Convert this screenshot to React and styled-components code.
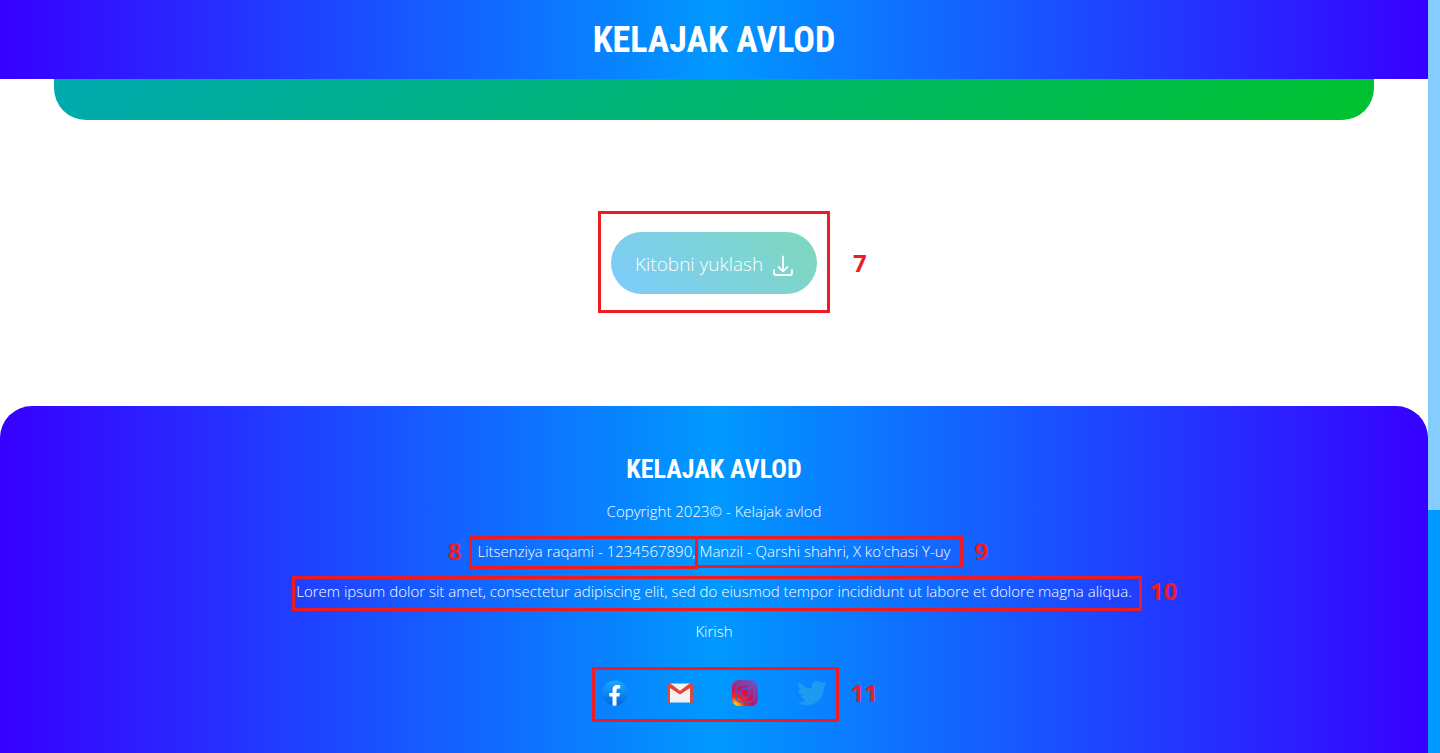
import React from 'react';
import styled, { createGlobalStyle } from 'styled-components';

const GlobalStyle = createGlobalStyle`
  * { box-sizing: border-box; }
  body { margin: 0; background: #fff; font-family: 'Open Sans', 'Noto Sans', sans-serif; }
`;

const brandGradient = 'linear-gradient(90deg, #3700ff, #0099ff 50%, #3700ff)';

const Page = styled.div`
  display: grid;
  grid-template-columns: minmax(0, 1fr) 12px;
  min-height: 100vh;
`;

const Content = styled.div`
  display: flex;
  flex-direction: column;
`;

const ScrollTrack = styled.div`
  display: flex;
  flex-direction: column;
  justify-content: flex-end;
  background: #85ccff;
`;

const ScrollThumb = styled.div`
  height: 243px;
  background: #0099ff;
`;

const Header = styled.header`
  display: flex;
  align-items: center;
  justify-content: center;
  height: 79px;
  background: ${brandGradient};
`;

const Brand = styled.div`
  color: #fff;
  font-family: 'Roboto Condensed', 'Liberation Sans Narrow', 'Liberation Sans', sans-serif;
  font-weight: 700;
  font-size: ${(p) => (p.$small ? 26 : 36)}px;
  line-height: ${(p) => (p.$small ? 44 : 60)}px;
  white-space: nowrap;
`;

const Main = styled.main`
  display: flex;
  flex: 1;
  flex-direction: column;
`;

const HeroEnd = styled.div`
  height: 41px;
  margin: 0 54px;
  border-radius: 0 0 32px 32px;
  background: linear-gradient(135deg, #00a9b0, #00c22e);
`;

const DownloadArea = styled.section`
  display: flex;
  flex: 1;
  align-items: center;
  justify-content: center;
  min-height: 286px;
`;

const Callout = styled.span`
  position: relative;
  display: inline-flex;
  &::after {
    content: '';
    position: absolute;
    inset: ${(p) => p.$inset};
    border: 3px solid #ed1c24;
    pointer-events: none;
  }
`;

const CalloutNumber = styled.span`
  position: absolute;
  top: 50%;
  ${(p) => (p.$before ? 'right' : 'left')}: calc(100% + ${(p) => p.$gap}px);
  transform: translateY(-50%);
  color: #ed1c24;
  font-size: 24px;
  font-weight: 700;
  line-height: 32px;
`;

const DownloadButton = styled.button`
  display: flex;
  align-items: center;
  justify-content: space-between;
  width: 206px;
  height: 62px;
  padding: 2px 24px 0;
  border: 0;
  border-radius: 32px;
  background: linear-gradient(45deg, #0099ff, #00b377);
  opacity: 0.5;
  color: #fff;
  font: 300 19px/28px 'Open Sans', 'Noto Sans', sans-serif;
  white-space: nowrap;
`;

const Footer = styled.footer`
  display: flex;
  flex-direction: column;
  align-items: center;
  min-height: 347px;
  padding: 41px 16px 32px;
  border-radius: 32px 32px 0 0;
  background: ${brandGradient};
`;

const Line = styled.p`
  display: flex;
  gap: 4px;
  margin: 0;
  color: #fff;
  font-size: 15px;
  font-weight: 300;
  line-height: 40px;
  white-space: nowrap;
`;

const LoginLink = styled.a`
  color: #fff;
  text-decoration: none;
`;

const Socials = styled.nav`
  display: flex;
  align-items: center;
  gap: 39px;
`;

const SocialRow = styled.div`
  display: flex;
  margin-top: 29px;
`;

const SocialLink = styled.a`
  display: flex;
  svg { display: block; }
`;

const DownloadIcon = () => (
  <svg width="20" height="24" viewBox="0 -4 20 24" fill="none" stroke="#fff" strokeWidth="1.8" strokeLinecap="round" strokeLinejoin="round" aria-hidden="true">
    <path d="M10 0.500v14.500M5.500 11l4.500 4.400 4.500-4.400M1 14v3q0 2 2 2h14q2 0 2-2v-3" />
  </svg>
);

const FacebookIcon = () => (
  <svg width="26" height="26" viewBox="0 0 26 26" aria-hidden="true">
    <defs>
      <linearGradient id="fb" x1="0" y1="0" x2="0" y2="1">
        <stop offset="0" stopColor="#18acfe" />
        <stop offset="1" stopColor="#0163e0" />
      </linearGradient>
    </defs>
    <circle cx="13" cy="13" r="12.5" fill="url(#fb)" />
    <path fill="#fff" d="M17.4 16.5l.6-3.600h-3.500v-2.400c0-1 .5-2 2-2h1.700V5.400s-1.500-.3-2.900-.3c-3 0-4.800 1.800-4.800 4.900v2.900H7.300v3.600h3.200v9q2 .3 4 0v-9z" />
  </svg>
);

const GmailIcon = () => (
  <svg width="26" height="20" viewBox="0 0 26 20" aria-hidden="true">
    <rect x="1" y="0.500" width="24" height="19" fill="#f2f2f2" />
    <path fill="#d54b3d" d="M0 2Q0 0 2 0l1 1v19H1.500Q0 20 0 18.500zM26 2q0-2-2-2l-1 1v19h1.500q1.500 0 1.500-1.500z" />
    <path fill="#e84435" d="M0 2Q0 0 2 0h.8L13 7.800 23.200 0h.8q2 0 2 2 0 1-1 1.700L13 11.500 1 3.700Q0 3 0 2z" />
  </svg>
);

const InstagramIcon = () => (
  <svg width="26" height="26" viewBox="0 0 26 26" fill="none" aria-hidden="true">
    <defs>
      <radialGradient id="ig" cx="0.120" cy="1" r="1.150">
        <stop offset="0.080" stopColor="#ffc800" />
        <stop offset="0.300" stopColor="#f02a24" />
        <stop offset="0.600" stopColor="#c9105e" />
        <stop offset="1" stopColor="#6655c8" />
      </radialGradient>
    </defs>
    <rect width="26" height="26" rx="6.500" fill="url(#ig)" />
    <rect x="4" y="4" width="18" height="18" rx="5" stroke="#5a55c0" strokeWidth="1.500" />
    <circle cx="13" cy="13" r="4.700" stroke="#5a55c0" strokeWidth="1.500" />
    <circle cx="18.200" cy="7.800" r="1.100" fill="#1685f0" />
  </svg>
);

const TwitterIcon = () => (
  <svg width="30" height="26" viewBox="0 2 24 20" aria-hidden="true">
    <path fill="#1d9bf0" d="M23.953 4.570a10 10 0 01-2.825.775 4.958 4.958 0 002.163-2.723c-.951.555-2.005.959-3.127 1.184a4.920 4.920 0 00-8.384 4.482C7.690 8.095 4.067 6.130 1.640 3.162a4.822 4.822 0 00-.666 2.475c0 1.710.870 3.213 2.188 4.096a4.904 4.904 0 01-2.228-.616v.060a4.923 4.923 0 003.946 4.827 4.996 4.996 0 01-2.212.085 4.936 4.936 0 004.604 3.417 9.867 9.867 0 01-6.102 2.105c-.390 0-.779-.023-1.170-.067a13.995 13.995 0 007.557 2.209c9.053 0 13.998-7.496 13.998-13.985 0-.210 0-.420-.015-.630A9.935 9.935 0 0024 4.590z" />
  </svg>
);

const socials = [
  { name: 'Facebook', Icon: FacebookIcon },
  { name: 'Gmail', Icon: GmailIcon },
  { name: 'Instagram', Icon: InstagramIcon },
  { name: 'Twitter', Icon: TwitterIcon },
];

export default function App() {
  return (
    <>
      <GlobalStyle />
      <Page>
        <Content>
          <Header>
            <Brand>KELAJAK AVLOD</Brand>
          </Header>
          <Main>
            <HeroEnd />
            <DownloadArea>
              <Callout $inset="-21px -13px -19px -13px">
                <DownloadButton type="button">
                  Kitobni yuklash
                  <DownloadIcon />
                </DownloadButton>
                <CalloutNumber $gap={36}>7</CalloutNumber>
              </Callout>
            </DownloadArea>
          </Main>
          <Footer>
            <Brand $small>KELAJAK AVLOD</Brand>
            <Line>Copyright 2023© - Kelajak avlod</Line>
            <Line>
              <Callout $inset="5px -3px 2px -8px">
                <CalloutNumber $before $gap={16}>8</CalloutNumber>
                Litsenziya raqami - 1234567890,
              </Callout>
              <Callout $inset="5px -12px 3px -4px">
                Manzil - Qarshi shahri, X ko'chasi Y-uy
                <CalloutNumber $gap={24}>9</CalloutNumber>
              </Callout>
            </Line>
            <Line>
              <Callout $inset="5px -10px 0 -4px">
                Lorem ipsum dolor sit amet, consectetur adipiscing elit, sed do eiusmod tempor incididunt ut labore et dolore magna aliqua.
                <CalloutNumber $gap={18}>10</CalloutNumber>
              </Callout>
            </Line>
            <Line>
              <LoginLink href="#kirish">Kirish</LoginLink>
            </Line>
            <SocialRow>
              <Callout $inset="-13px -12px -16px -10px">
                <Socials aria-label="Social">
                  {socials.map(({ name, Icon }) => (
                    <SocialLink key={name} href={`#${name.toLowerCase()}`} aria-label={name}>
                      <Icon />
                    </SocialLink>
                  ))}
                </Socials>
                <CalloutNumber $gap={24}>11</CalloutNumber>
              </Callout>
            </SocialRow>
          </Footer>
        </Content>
        <ScrollTrack>
          <ScrollThumb />
        </ScrollTrack>
      </Page>
    </>
  );
}
